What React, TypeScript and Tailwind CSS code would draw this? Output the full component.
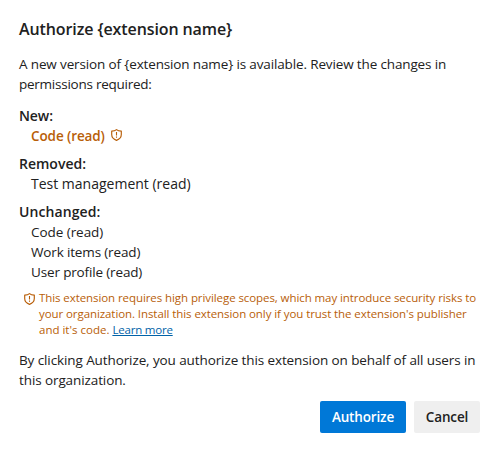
import type { ReactNode } from "react";

function ShieldIcon({ className }: { className: string }) {
  return (
    <svg viewBox="0 0 11 12" fill="none" stroke="currentColor" className={className} aria-hidden="true">
      <path d="M5.5.6C4.4 1.5 2.7 2 .7 2.1v3.5c0 2.7 1.7 4.7 4.8 5.8 3.1-1.1 4.8-3.1 4.8-5.8V2.1C8.3 2 6.6 1.5 5.5.6Z" strokeWidth="1.15" strokeLinejoin="round" />
      <path d="M5.5 3v3.6M5.5 7.5v1.2" strokeWidth="1.1" />
    </svg>
  );
}

function Group({ title, className, children }: { title: string; className: string; children: ReactNode }) {
  return (
    <section className="mb-2">
      <h2 className={className}>{title}</h2>
      <ul className="pl-3">{children}</ul>
    </section>
  );
}

export default function App() {
  return (
    <main className="flex h-[451px] w-[497px] flex-col bg-white pt-[17px] pr-[17px] pl-[19px] font-['Open_Sans','Noto_Sans',sans-serif] text-[13.5px] leading-5 whitespace-nowrap text-[#212121]">
      <h1 className="mb-[13px] text-[16px] leading-6 font-semibold tracking-[-0.1px]">Authorize {"{extension name}"}</h1>
      <p className="mb-3">
        <span className="tracking-[-0.14px]">A new version of {"{extension name}"} is available. Review the changes in</span>
        <br />
        <span className="tracking-[-0.25px]">permissions required:</span>
      </p>
      <Group title="New:" className="text-[14px] font-semibold tracking-[-0.1px]">
        <li className="flex items-center font-semibold text-[#b85e08]">
          <span className="w-20 tracking-[-0.1px]">Code (read)</span>
          <ShieldIcon className="-mt-[2px] h-3 w-[11px] shrink-0" />
        </li>
      </Group>
      <Group title="Removed:" className="text-[14px] font-semibold">
        <li className="text-[14px]">Test management (read)</li>
      </Group>
      <Group title="Unchanged:" className="text-[14px] font-semibold tracking-[0.1px]">
        <li className="tracking-[-0.05px]">Code (read)</li>
        <li className="tracking-[-0.15px]">Work items (read)</li>
        <li className="tracking-[-0.15px]">User profile (read)</li>
      </Group>
      <div className="mb-3 flex pl-[5px] text-[11.5px] leading-4 text-[#b85e08]">
        <ShieldIcon className="mt-[3px] mr-1 h-3 w-[11px] shrink-0" />
        <p className="tracking-[-0.08px]">
          <span>This extension requires high privilege scopes, which may introduce security risks to</span>
          <br />
          <span>your organization. Install this extension only if you trust the extension's publisher</span>
          <br />
          <span className="tracking-[0px]">and it's code. </span>
          <a className="tracking-[-0.2px] text-[#0062a8] underline" href="#">Learn more</a>
        </p>
      </div>
      <p>
        <span className="tracking-[-0.1px]">By clicking Authorize, you authorize this extension on behalf of all users in</span>
        <br />
        <span className="tracking-[-0.1px]">this organization.</span>
      </p>
      <div className="mt-[11px] flex justify-end gap-2 font-semibold tracking-[-0.15px]">
        <button className="h-8 w-[86px] rounded-[2px] bg-[#0078d7] text-white">Authorize</button>
        <button className="h-8 w-[66px] rounded-[2px] bg-[#efefef]">Cancel</button>
      </div>
    </main>
  );
}
